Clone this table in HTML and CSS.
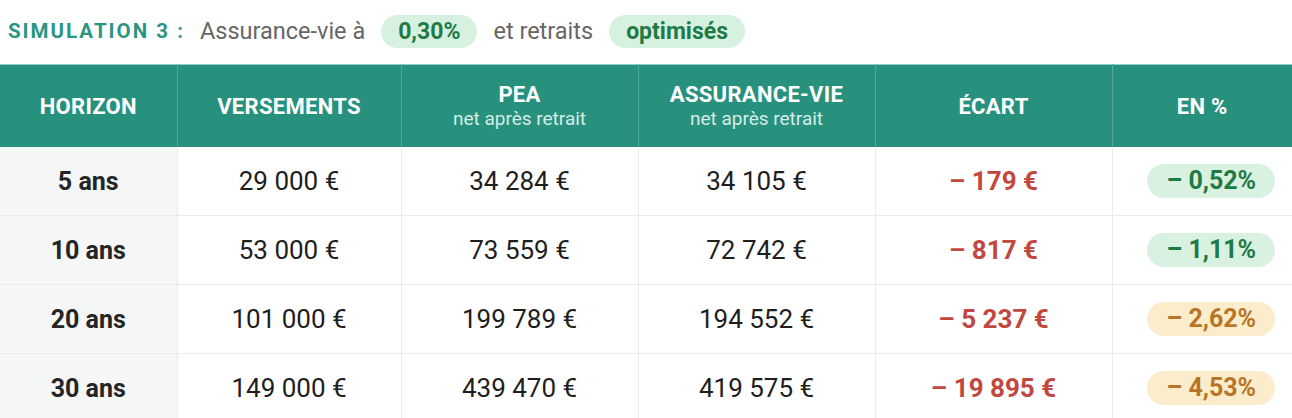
FILE: index.html
```html
<!DOCTYPE html>
<html lang="fr">
<head>
<meta charset="utf-8">
<link rel="stylesheet" href="styles.css">
</head>
<body>
<div class="title">
  <span class="sim">SIMULATION 3 :</span>
  <span class="txt">Assurance-vie à</span>
  <span class="pill">0,30%</span>
  <span class="txt">et retraits</span>
  <span class="pill">optimisés</span>
</div>
<table class="tbl">
  <colgroup>
    <col class="c1"><col class="c2"><col class="c3"><col class="c4"><col class="c5"><col class="c6">
  </colgroup>
  <thead>
    <tr>
      <th>HORIZON</th>
      <th>VERSEMENTS</th>
      <th>PEA<span class="sub">net après retrait</span></th>
      <th>ASSURANCE-VIE<span class="sub">net après retrait</span></th>
      <th>ÉCART</th>
      <th>EN %</th>
    </tr>
  </thead>
  <tbody>
    <tr><td class="h">5 ans</td><td>29 000 €</td><td>34 284 €</td><td>34 105 €</td><td class="neg">– 179 €</td><td class="p"><span class="pct g">– 0,52%</span></td></tr>
    <tr><td class="h">10 ans</td><td>53 000 €</td><td>73 559 €</td><td>72 742 €</td><td class="neg">– 817 €</td><td class="p"><span class="pct g">– 1,11%</span></td></tr>
    <tr><td class="h">20 ans</td><td>101 000 €</td><td>199 789 €</td><td>194 552 €</td><td class="neg">– 5 237 €</td><td class="p"><span class="pct o">– 2,62%</span></td></tr>
    <tr><td class="h">30 ans</td><td>149 000 €</td><td>439 470 €</td><td>419 575 €</td><td class="neg">– 19 895 €</td><td class="p"><span class="pct o">– 4,53%</span></td></tr>
  </tbody>
</table>
</body>
</html>
```
FILE: styles.css
```css
html, body {
  margin: 0;
  padding: 0;
  background: #ffffff;
  font-family: Roboto, "Liberation Sans", sans-serif;
}
.title {
  display: flex;
  align-items: center;
  height: 64px;
  padding-left: 8px;
  box-sizing: border-box;
  padding-bottom: 2px;
}
.sim {
  font-size: 20.5px;
  font-weight: 700;
  color: #2a9680;
  letter-spacing: 2px;
  margin-right: 15px;
}
.txt {
  font-size: 23.5px;
  color: #666666;
}
.pill {
  background: #d7f1e1;
  color: #1f7a45;
  font-weight: 700;
  font-size: 23px;
  border-radius: 17px;
  height: 33px;
  line-height: 33px;
  padding: 0 17px;
  margin: 0 16px;
}
.tbl {
  width: 1292px;
  border-collapse: collapse;
  table-layout: fixed;
}
.c1 { width: 177px; }
.c2 { width: 224px; }
.c3 { width: 237px; }
.c4 { width: 237px; }
.c5 { width: 237px; }
.c6 { width: 180px; }
thead tr {
  background: #27917d;
  border-top: 1px solid #8fd3c6;
}
th {
  height: 82px;
  padding: 0;
  color: #ffffff;
  font-size: 22px;
  font-weight: 700;
  letter-spacing: 0.3px;
  text-align: center;
  vertical-align: middle;
  border-left: 1px solid #4fab99;
  line-height: 25px;
}
th:first-child { border-left: none; }
.sub {
  display: block;
  font-size: 19px;
  font-weight: 400;
  letter-spacing: 0;
  color: #d4ece7;
  line-height: 24px;
}
td {
  height: 68px;
  padding: 0;
  text-align: center;
  vertical-align: middle;
  font-size: 26px;
  color: #1e1e1e;
  border-left: 1px solid #ebebeb;
  border-bottom: 1px solid #ebebeb;
}
td.h {
  border-left: none;
  background: #f5f6f6;
  font-weight: 700;
  font-size: 25px;
  color: #252525;
}
td.neg {
  color: #c2473f;
  font-weight: 700;
}
td.p {
  padding-left: 18px;
}
.pct {
  display: inline-block;
  height: 34px;
  line-height: 34px;
  width: 128px;
  border-radius: 17px;
  font-weight: 700;
  font-size: 25px;
  vertical-align: middle;
}
.pct.g { background: #d8f1e1; color: #1f7a45; }
.pct.o { background: #fbeccb; color: #b87427; }
```
